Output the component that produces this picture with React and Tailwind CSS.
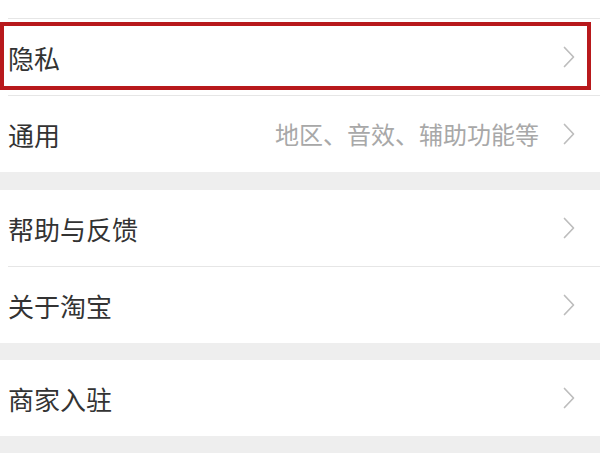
import React from 'react';

const Chevron = () => (
  <svg width="12" height="22" viewBox="0 0 12 22" fill="none" className="shrink-0">
    <polyline points="1.5,1.5 10.5,11 1.5,20.5" stroke="#bdbdbd" strokeWidth="1.7" strokeLinecap="round" strokeLinejoin="round" />
  </svg>
);

const Row = ({ label, hint, divider, highlight }) => (
  <div className="relative bg-white">
    <div className="flex h-[76px] items-center justify-between pl-[8px] pr-[25px]">
      <span className="text-[26px] text-[#333]">{label}</span>
      <div className="flex items-center gap-[24px]">
        {hint && <span className="text-[24px] text-[#a8a8a8]">{hint}</span>}
        <Chevron />
      </div>
    </div>
    {divider && <div className="ml-[8px] h-px bg-[#e6e6e6]" />}
    {highlight && (
      <div className="absolute left-0 top-[3px] h-[68px] w-[591px] border-4 border-[#b8191c]" />
    )}
  </div>
);

export default function App() {
  return (
    <div
      className="h-[453px] w-[600px] overflow-hidden bg-[#eeeeee]"
      style={{ fontFamily: '"Noto Sans CJK SC", "Noto Sans", sans-serif' }}
    >
      <div className="bg-white">
        <div className="h-[18px]" />
        <div className="ml-[8px] h-px bg-[#e6e6e6]" />
      </div>
      <Row label="隐私" divider highlight />
      <Row label="通用" hint="地区、音效、辅助功能等" />
      <div className="h-[18px] bg-[#eeeeee]" />
      <Row label="帮助与反馈" divider />
      <Row label="关于淘宝" />
      <div className="h-[17px] bg-[#eeeeee]" />
      <Row label="商家入驻" />
    </div>
  );
}
